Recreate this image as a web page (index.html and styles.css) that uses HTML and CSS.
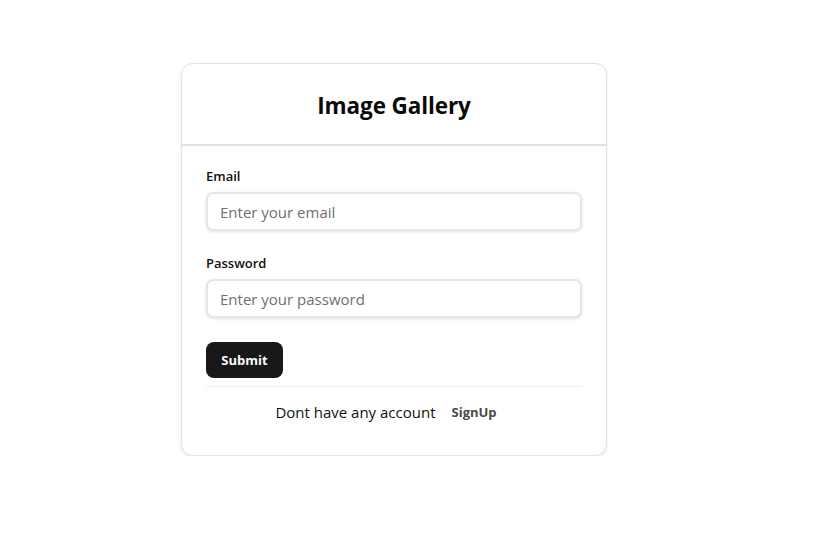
FILE: index.html
```html
<!DOCTYPE html>
<html lang="en">
<head>
<meta charset="utf-8">
<title>Image Gallery</title>
<link rel="stylesheet" href="styles.css">
</head>
<body>
<div class="page">
  <div class="card">
    <div class="card-header">
      <h1 class="title">Image Gallery</h1>
    </div>
    <form class="card-body">
      <div class="field">
        <label class="label" for="email">Email</label>
        <input class="input" id="email" type="email" placeholder="Enter your email">
      </div>
      <div class="field">
        <label class="label" for="password">Password</label>
        <input class="input" id="password" type="password" placeholder="Enter your password">
      </div>
      <div class="actions">
        <button class="btn-primary" type="button">Submit</button>
      </div>
      <div class="footer">
        <span class="footer-text">Dont have any account</span>
        <button class="btn-ghost" type="button">SignUp</button>
      </div>
    </form>
  </div>
</div>
</body>
</html>
```
FILE: styles.css
```css
* { box-sizing: border-box; }
html, body { margin: 0; padding: 0; background: #ffffff; }
body {
  font-family: "Open Sans", "Noto Sans", "Liberation Sans", sans-serif;
  color: #0a0a0a;
}
.page {
  padding: 63px 0 0 181px;
}
.card {
  width: 426px;
  border: 1px solid #e3e3e3;
  border-radius: 12px;
  background: #fff;
  box-shadow: 0 1px 3px rgba(0,0,0,0.1);
}
.card-header {
  height: 82px;
  padding-top: 4px;
  border-bottom: 2px solid #e2e2e2;
  display: flex;
  align-items: center;
  justify-content: center;
}
.title {
  margin: 0;
  font-size: 22.5px;
  font-weight: 700;
  letter-spacing: -0.1px;
  line-height: 1;
}
.card-body {
  padding: 22px 24px 25px 24px;
  display: flex;
  flex-direction: column;
}
.field {
  display: flex;
  flex-direction: column;
  gap: 8px;
  margin-bottom: 24px;
}
.label {
  font-size: 13px;
  font-weight: 600;
  line-height: 16px;
  color: #111;
}
.input {
  width: 376px;
  height: 39px;
  border: 2px solid #e6e6e6;
  border-radius: 7px;
  padding: 1px 12px 0 12px;
  font-family: inherit;
  font-size: 15px;
  color: #222;
  background: #fff;
  box-shadow: 0 1px 3px rgba(0,0,0,0.12);
  outline: none;
}
.input::placeholder { color: #6f6f6f; }
.actions {
  padding-bottom: 8px;
  border-bottom: 1px solid #ececec;
  width: 376px;
}
.btn-primary {
  display: block;
  height: 36px;
  width: 77px;
  border: none;
  border-radius: 8px;
  background: #18181a;
  color: #fafafa;
  font-family: inherit;
  font-size: 13px;
  font-weight: 700;
  cursor: pointer;
}
.footer {
  display: flex;
  align-items: center;
  justify-content: center;
  padding-top: 7px;
}
.footer-text {
  font-size: 15px;
  color: #111;
}
.btn-ghost {
  height: 36px;
  padding: 0 16px;
  border: none;
  background: transparent;
  font-family: inherit;
  font-size: 13px;
  font-weight: 700;
  color: #4a4a4a;
  cursor: pointer;
}
```
